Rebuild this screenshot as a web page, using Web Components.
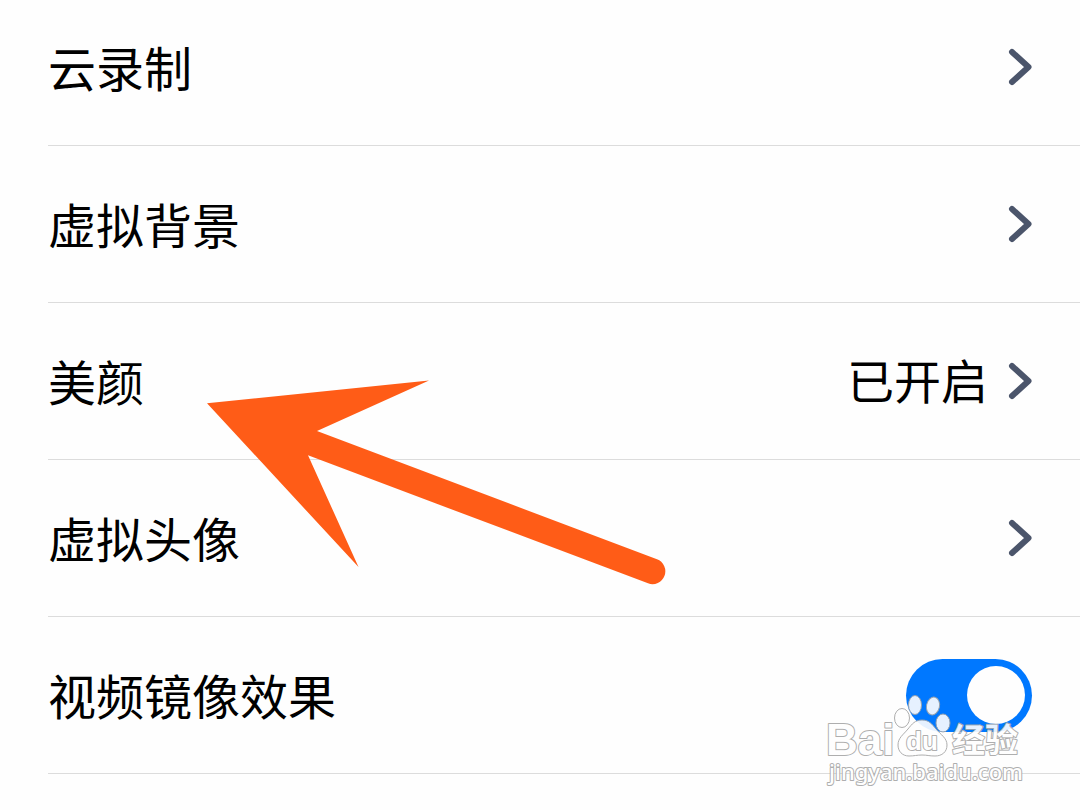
<!DOCTYPE html>
<html lang="zh-CN">
<head>
<meta charset="utf-8">
<meta name="viewport" content="width=device-width, initial-scale=1">
<title>会议设置</title>
<style>
body { margin: 0; background: #fefefe; color: #000; font-family: "Noto Sans CJK SC", sans-serif; }
</style>
</head>
<body>
<settings-page>
  <settings-row label="云录制"></settings-row>
  <settings-row label="虚拟背景"></settings-row>
  <settings-row label="美颜">已开启</settings-row>
  <settings-row label="虚拟头像"></settings-row>
  <settings-switch label="视频镜像效果"></settings-switch>
  <pointer-arrow slot="overlay"></pointer-arrow>
  <site-watermark slot="overlay"></site-watermark>
</settings-page>
<script>
class SettingsPage extends HTMLElement {
  constructor() {
    super();
    this.attachShadow({ mode: 'open' }).innerHTML = `
      <style>
        :host { display: block; position: relative; min-height: 100vh; overflow: hidden; }
        /* the list is scrolled a little past the top of its first row */
        main { display: flex; flex-direction: column; margin-top: -11px; }
      </style>
      <main><slot></slot></main>
      <slot name="overlay"></slot>`;
  }
}

const rowStyle = `
  :host { display: block; padding-left: 48px; }
  .row {
    box-sizing: border-box; display: flex; align-items: center; width: 100%;
    height: 157px; padding: 0 48px 0 0; margin: 0; border: 0;
    border-bottom: 1px solid #dcdcdc; background: none; color: inherit;
    font-family: inherit; font-size: 48px; line-height: 72px; text-align: left;
  }
  .label { flex: 1; padding-bottom: 2px; }`;

class SettingsRow extends HTMLElement {
  constructor() {
    super();
    this.attachShadow({ mode: 'open' }).innerHTML = `
      <style>${rowStyle}
        .value { font-size: 47px; margin-right: 20px; padding-bottom: 4px; }
        svg { display: block; flex: none; }
      </style>
      <button class="row" type="button">
        <span class="label"></span>
        <span class="value"><slot></slot></span>
        <svg width="24" height="38" viewBox="0 0 24 38" aria-hidden="true">
          <path d="M4 4 20.500 19 4 34" fill="none" stroke="#4b556b" stroke-width="6" stroke-linecap="round" stroke-linejoin="round"/>
        </svg>
      </button>`;
  }
  connectedCallback() {
    this.shadowRoot.querySelector('.label').textContent = this.getAttribute('label');
  }
}

class SettingsSwitch extends HTMLElement {
  constructor() {
    super();
    this.attachShadow({ mode: 'open' }).innerHTML = `
      <style>${rowStyle}
        input {
          appearance: none; box-sizing: border-box; flex: none; display: flex;
          width: 126px; height: 73px; margin: 0; padding: 7px;
          border-radius: 37px; background: #c9ccd2; align-items: center;
        }
        input::before { content: ""; width: 58px; height: 58px; border-radius: 50%; background: #fefefe; }
        input:checked { background: #0078ff; justify-content: flex-end; }
      </style>
      <div class="row">
        <label class="label" for="toggle"></label>
        <input id="toggle" type="checkbox" role="switch" checked>
      </div>`;
  }
  connectedCallback() {
    this.shadowRoot.querySelector('.label').textContent = this.getAttribute('label');
  }
}

class PointerArrow extends HTMLElement {
  constructor() {
    super();
    this.attachShadow({ mode: 'open' }).innerHTML = `
      <style>
        :host { display: block; position: absolute; left: 207px; top: 380px; pointer-events: none; }
        svg { display: block; }
      </style>
      <svg width="460" height="206" viewBox="0 0 460 206" aria-hidden="true">
        <path fill="#ff5c17" d="M0 23.300 222 0.500 110 51 450 179.300A12.800 12.800 0 0 1 441 203.300L101 75.300 151.500 187Z"/>
      </svg>`;
  }
}

class SiteWatermark extends HTMLElement {
  constructor() {
    super();
    this.attachShadow({ mode: 'open' }).innerHTML = `
      <style>
        :host { display: block; position: absolute; right: 56px; top: 690px; pointer-events: none; }
        svg { display: block; }
        text { paint-order: stroke; }
        .latin { font-family: "Liberation Sans", sans-serif; font-weight: 700; }
        .cjk { font-family: "Noto Sans CJK SC", sans-serif; font-weight: 700; }
        .url { font-family: "Noto Sans", sans-serif; font-weight: 500; }
      </style>
      <svg width="204" height="106" viewBox="0 0 204 106">
        <g fill="#fff" stroke="#a6a6a6" stroke-width="2" stroke-linejoin="round" opacity=".9">
          <text class="latin" x="6" y="65" font-size="44">Bai</text>
          <g stroke-width="1">
            <ellipse cx="82" cy="28" rx="7.500" ry="9.500"/>
            <ellipse cx="95" cy="15" rx="6.500" ry="9.500"/>
            <ellipse cx="113" cy="16" rx="6.500" ry="9" transform="rotate(12 113 16)"/>
            <ellipse cx="123" cy="33" rx="7" ry="9"/>
            <path d="M102 30C109 30 112 34 116 39C121 45 127 48 127 55C127 62 122 66 115 66C109 66 107 65 102 65C97 65 94 66 89 66C82 66 78 61 78 55C78 48 83 45 88 39C92 34 95 30 102 30Z"/>
          </g>
          <text class="latin" x="86" y="60" font-size="26">du</text>
          <text class="cjk" x="132" y="62" font-size="33">经验</text>
          <text class="url" x="9" y="90" font-size="22">jingyan.baidu.com</text>
        </g>
      </svg>`;
  }
}

customElements.define('settings-page', SettingsPage);
customElements.define('settings-row', SettingsRow);
customElements.define('settings-switch', SettingsSwitch);
customElements.define('pointer-arrow', PointerArrow);
customElements.define('site-watermark', SiteWatermark);
</script>
</body>
</html>
